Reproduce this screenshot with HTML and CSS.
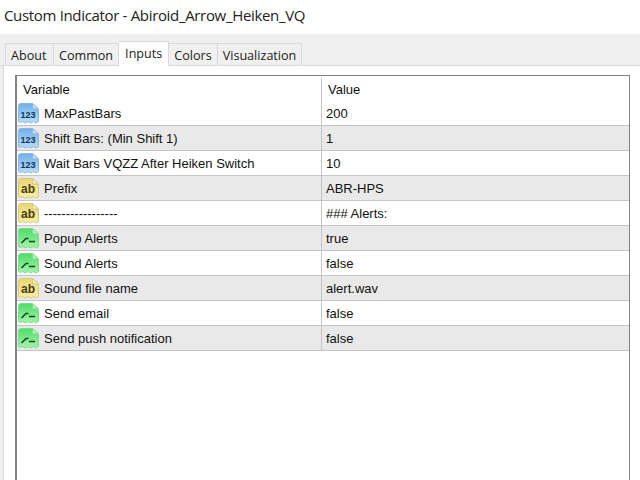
FILE: index.html
```html
<!DOCTYPE html>
<html lang="en">
<head>
    <meta charset="UTF-8">
    <title>Custom Indicator</title>
    <link rel="stylesheet" href="styles.css">
</head>
<body>
    <svg class="defs" width="0" height="0">
        <defs>
            <linearGradient id="blue" x1="0" y1="0" x2="0" y2="1">
                <stop offset="0" stop-color="#6fb0e8"/>
                <stop offset="1" stop-color="#bcdcf6"/>
            </linearGradient>
            <linearGradient id="yellow" x1="0" y1="0" x2="0" y2="1">
                <stop offset="0" stop-color="#e8d676"/>
                <stop offset="1" stop-color="#f8eeaa"/>
            </linearGradient>
            <linearGradient id="green" x1="0" y1="0" x2="0" y2="1">
                <stop offset="0" stop-color="#4fdc68"/>
                <stop offset="1" stop-color="#a6f2ae"/>
            </linearGradient>
        </defs>
        <symbol id="sheet" viewBox="0 0 21 21">
            <path d="M0.500 3Q0.500 0.500 3 0.500H14.500L20.500 6V18.500L18 20L15.500 18.500L12.500 20L10 18.500L7 20L4.500 18.500L2 19.500L0.500 18.500Z"/>
            <path class="fold" d="M14.500 0.500V6H20.500Z"/>
        </symbol>
    </svg>

    <div class="titlebar">Custom Indicator - Abiroid_Arrow_Heiken_VQ</div>

    <div class="tabstrip">
        <div class="tab">About</div>
        <div class="tab">Common</div>
        <div class="tab active">Inputs</div>
        <div class="tab">Colors</div>
        <div class="tab">Visualization</div>
    </div>

    <div class="panel">
        <div class="table">
            <div class="row head">
                <div class="cell name">Variable</div>
                <div class="cell value">Value</div>
            </div>

            <div class="row">
                <div class="cell name">
                    <svg class="icon num" width="21" height="21"><use href="#sheet"/><text x="2.500" y="15">123</text></svg>
                    MaxPastBars
                </div>
                <div class="cell value">200</div>
            </div>
            <div class="row alt">
                <div class="cell name">
                    <svg class="icon num" width="21" height="21"><use href="#sheet"/><text x="2.500" y="15">123</text></svg>
                    Shift Bars: (Min Shift 1)
                </div>
                <div class="cell value">1</div>
            </div>
            <div class="row">
                <div class="cell name">
                    <svg class="icon num" width="21" height="21"><use href="#sheet"/><text x="2.500" y="15">123</text></svg>
                    Wait Bars VQZZ After Heiken Switch
                </div>
                <div class="cell value">10</div>
            </div>
            <div class="row alt">
                <div class="cell name">
                    <svg class="icon str" width="21" height="21"><use href="#sheet"/><text x="3" y="15">ab</text></svg>
                    Prefix
                </div>
                <div class="cell value">ABR-HPS</div>
            </div>
            <div class="row">
                <div class="cell name">
                    <svg class="icon str" width="21" height="21"><use href="#sheet"/><text x="3" y="15">ab</text></svg>
                    -----------------
                </div>
                <div class="cell value">### Alerts:</div>
            </div>
            <div class="row alt">
                <div class="cell name">
                    <svg class="icon bool" width="21" height="21"><use href="#sheet"/><path class="mark" d="M3.500 15L8 10.500H10.500M11 13.500H17"/></svg>
                    Popup Alerts
                </div>
                <div class="cell value">true</div>
            </div>
            <div class="row">
                <div class="cell name">
                    <svg class="icon bool" width="21" height="21"><use href="#sheet"/><path class="mark" d="M3.500 15L8 10.500H10.500M11 13.500H17"/></svg>
                    Sound Alerts
                </div>
                <div class="cell value">false</div>
            </div>
            <div class="row alt">
                <div class="cell name">
                    <svg class="icon str" width="21" height="21"><use href="#sheet"/><text x="3" y="15">ab</text></svg>
                    Sound file name
                </div>
                <div class="cell value">alert.wav</div>
            </div>
            <div class="row">
                <div class="cell name">
                    <svg class="icon bool" width="21" height="21"><use href="#sheet"/><path class="mark" d="M3.500 15L8 10.500H10.500M11 13.500H17"/></svg>
                    Send email
                </div>
                <div class="cell value">false</div>
            </div>
            <div class="row alt">
                <div class="cell name">
                    <svg class="icon bool" width="21" height="21"><use href="#sheet"/><path class="mark" d="M3.500 15L8 10.500H10.500M11 13.500H17"/></svg>
                    Send push notification
                </div>
                <div class="cell value">false</div>
            </div>
        </div>
    </div>
</body>
</html>
```

FILE: styles.css
```css
html, body {
    margin: 0;
    padding: 0;
    height: 100%;
    overflow: hidden;
}
body {
    display: flex;
    flex-direction: column;
    height: 480px;
    background: #f0f0f0;
    font-family: "Liberation Sans", Arial, sans-serif;
    font-size: 13px;
    color: #111;
}
.defs {
    flex: none;
}
.titlebar {
    height: 34px;
    padding-left: 4px;
    line-height: 31px;
    background: #fff;
    font-family: "Open Sans", sans-serif;
    font-size: 15px;
    letter-spacing: -0.33px;
    color: #222;
}
.tabstrip {
    display: flex;
    height: 32px;
    box-sizing: border-box;
    padding: 9px 0 0 5px;
    border-bottom: 1px solid #d9d9d9;
    background: #f0f0f0;
}
.tab {
    height: 22px;
    padding: 0 5px;
    line-height: 24px;
    border: 1px solid #d9d9d9;
    border-bottom: none;
    border-left: none;
    font-family: "Open Sans", sans-serif;
    font-size: 12.600px;
    color: #222;
}
.tab:first-child {
    padding-right: 6.500px;
    border-left: 1px solid #d9d9d9;
}
.tab.active {
    height: 24px;
    margin: -2px 0 -1px;
    padding: 0 6px;
    line-height: 24px;
    background: #fff;
}
.panel {
    flex: 1;
    margin-left: 3px;
    padding: 9px 10px 0 11px;
    border-left: 1px solid #d9d9d9;
    background: #fff;
}
.table {
    height: 100%;
    box-sizing: border-box;
    border: 2px solid #7f8289;
    border-width: 1px 1px 0 2px;
    background: #fff;
}
.row {
    display: flex;
    height: 25px;
    box-sizing: border-box;
    border-bottom: 1px solid #c4c4c4;
}
.row.head {
    padding-top: 2px;
    border-bottom: none;
}
.row.alt {
    background: #e9e9e9;
}
.cell {
    display: flex;
    align-items: center;
}
.name {
    width: 305px;
    flex: none;
    box-sizing: border-box;
    padding-left: 1px;
    gap: 5px;
    border-right: 1px solid #c4c4c4;
}
.value {
    padding-left: 4px;
}
.head .name {
    padding-left: 6px;
}
.head .value {
    padding-left: 6px;
}
.icon {
    flex: none;
}
.icon text {
    font-family: "Liberation Sans", Arial, sans-serif;
    font-weight: bold;
}
.icon.num use {
    fill: url(#blue);
    stroke: #8ab8e2;
}
.icon.num text {
    font-size: 9px;
    fill: #0f3560;
}
.icon.str use {
    fill: url(#yellow);
    stroke: #d8c878;
}
.icon.str text {
    font-size: 12px;
    fill: #4a3c08;
}
.icon.bool use {
    fill: url(#green);
    stroke: #7cdc8c;
}
.mark {
    fill: none;
    stroke: #0c4a18;
    stroke-width: 1.500;
}
.fold {
    fill: #fff;
    fill-opacity: 0.55;
}
```
